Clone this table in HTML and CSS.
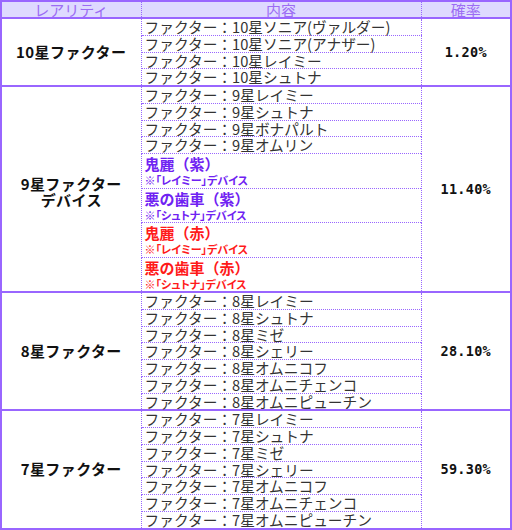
FILE: index.html
```html
<!DOCTYPE html>
<html lang="ja">
<head>
<meta charset="utf-8">
<link rel="stylesheet" href="styles.css">
</head>
<body>
<table class="rates">
<colgroup><col class="c1"><col class="c2"><col class="c3"></colgroup>
<thead>
<tr><th>レアリティ</th><th>内容</th><th>確率</th></tr>
</thead>
<tbody>
<tr><td class="rar" rowspan="4">10星ファクター</td><td class="item">ファクター：10星ソニア(ヴァルダー)</td><td class="pct" rowspan="4">1.20%</td></tr>
<tr><td class="item">ファクター：10星ソニア(アナザー)</td></tr>
<tr><td class="item">ファクター：10星レイミー</td></tr>
<tr><td class="item">ファクター：10星シュトナ</td></tr>
</tbody>
<tbody>
<tr><td class="rar rar-two" rowspan="8">9星ファクター<br>デバイス</td><td class="item">ファクター：9星レイミー</td><td class="pct" rowspan="8">11.40%</td></tr>
<tr><td class="item">ファクター：9星シュトナ</td></tr>
<tr><td class="item">ファクター：9星ボナパルト</td></tr>
<tr><td class="item">ファクター：9星オムリン</td></tr>
<tr><td class="item dev purple"><div class="dname">鬼麗（紫）</div><div class="dnote">※「レイミー」デバイス</div></td></tr>
<tr><td class="item dev purple"><div class="dname">悪の歯車（紫）</div><div class="dnote">※「シュトナ」デバイス</div></td></tr>
<tr><td class="item dev red"><div class="dname">鬼麗（赤）</div><div class="dnote">※「レイミー」デバイス</div></td></tr>
<tr><td class="item dev red"><div class="dname">悪の歯車（赤）</div><div class="dnote">※「シュトナ」デバイス</div></td></tr>
</tbody>
<tbody>
<tr><td class="rar" rowspan="7">8星ファクター</td><td class="item">ファクター：8星レイミー</td><td class="pct" rowspan="7">28.10%</td></tr>
<tr><td class="item">ファクター：8星シュトナ</td></tr>
<tr><td class="item">ファクター：8星ミゼ</td></tr>
<tr><td class="item">ファクター：8星シェリー</td></tr>
<tr><td class="item">ファクター：8星オムニコフ</td></tr>
<tr><td class="item">ファクター：8星オムニチェンコ</td></tr>
<tr><td class="item">ファクター：8星オムニピューチン</td></tr>
</tbody>
<tbody>
<tr><td class="rar" rowspan="7">7星ファクター</td><td class="item">ファクター：7星レイミー</td><td class="pct" rowspan="7">59.30%</td></tr>
<tr><td class="item">ファクター：7星シュトナ</td></tr>
<tr><td class="item">ファクター：7星ミゼ</td></tr>
<tr><td class="item">ファクター：7星シェリー</td></tr>
<tr><td class="item">ファクター：7星オムニコフ</td></tr>
<tr><td class="item">ファクター：7星オムニチェンコ</td></tr>
<tr><td class="item">ファクター：7星オムニピューチン</td></tr>
</tbody>
</table>
</body>
</html>
```
FILE: styles.css
```css
html, body {
  margin: 0;
  padding: 0;
  background: #ffffff;
}

.rates {
  border-collapse: collapse;
  table-layout: fixed;
  width: 512px;
  border: 2px solid #9966ff;
  font-family: "Noto Sans CJK JP", sans-serif;
}

.c1 { width: 140px; }
.c3 { width: 90px; }

.rates th {
  background: #dedaff;
  color: #9c6cf4;
  font-weight: normal;
  font-size: 15px;
  line-height: 15px;
  height: 15px;
  padding: 0;
  border-top: 2px solid #9966ff;
  border-bottom: 2px solid #9966ff;
  border-left: 1px dotted #9966ff;
  border-right: 1px dotted #9966ff;
}

.rates tbody tr:first-child td {
  border-top: 2px solid #9966ff;
}

.rates td {
  padding: 0;
}

.rar {
  text-align: center;
  vertical-align: middle;
  font-weight: bold;
  font-size: 15px;
  line-height: 16px;
  letter-spacing: 0.4px;
  color: #111;
  border-right: 1px dotted #9966ff;
}

.rates td.rar-two {
  padding-top: 6px;
}

.pct {
  text-align: center;
  vertical-align: middle;
  font-family: "DejaVu Sans Mono", monospace;
  font-weight: bold;
  font-size: 13.5px;
  letter-spacing: 0.3px;
  color: #111;
  border-left: 1px dotted #9966ff;
}

.item {
  font-size: 14.7px;
  line-height: 15.75px;
  height: 15.75px;
  color: #333;
  padding-left: 3px !important;
  white-space: nowrap;
  border-bottom: 1px dotted #9966ff;
  vertical-align: bottom;
}

.dev {
  height: 33.5px;
  font-weight: bold;
}

.dname {
  font-size: 15px;
  line-height: 19px;
}

.dnote {
  font-size: 11px;
  line-height: 14.5px;
  font-feature-settings: "palt";
}

.purple { color: #6f22f2; }
.red { color: #ff1a1a; }
```
